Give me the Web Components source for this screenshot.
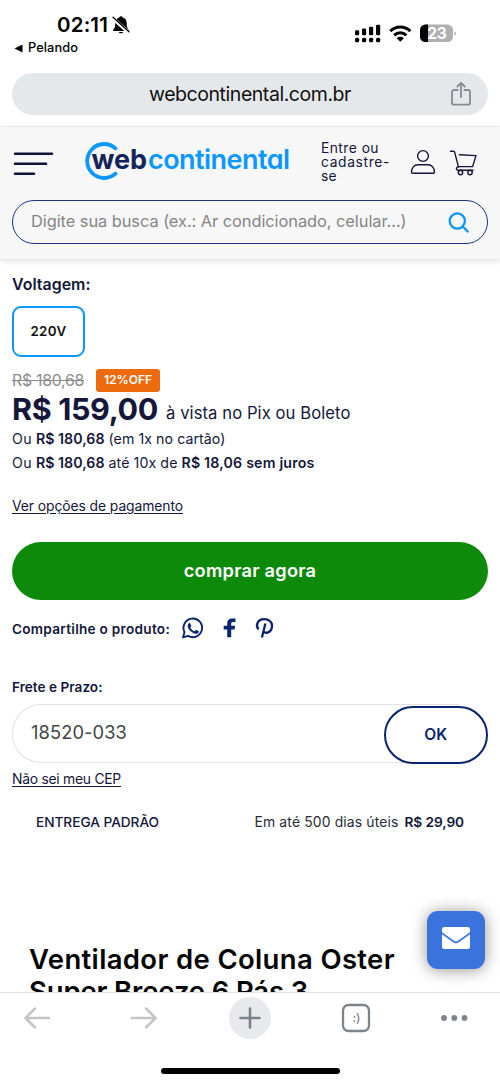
<!DOCTYPE html>
<html lang="pt-BR">
<head>
<meta charset="utf-8">
<title>webcontinental.com.br</title>
<style>
html,body{margin:0;padding:0;background:#fff}
body{font-family:Inter,"Liberation Sans",sans-serif;color:#14173a;width:500px;height:1083px;overflow:hidden}
</style>
</head>
<body>
<app-shell>
  <status-bar slot="top"></status-bar>
  <address-bar slot="top"><x-text s="19.5" w="202" c="#111">webcontinental.com.br</x-text></address-bar>
  <site-header slot="top"></site-header>
  <product-panel></product-panel>
  <mail-button slot="float"></mail-button>
  <browser-toolbar slot="bottom"></browser-toolbar>
</app-shell>
<script>
function element(name, html) {
  const t = document.createElement('template');
  t.innerHTML = html;
  customElements.define(name, class extends HTMLElement {
    constructor() {
      super();
      this.attachShadow({mode: 'open'}).append(t.content.cloneNode(true));
    }
  });
}

element('app-shell', `<style>
:host{display:flex;flex-direction:column;position:relative;width:500px;height:1083px;overflow:hidden;background:#fff}
main{flex:1;min-height:0;overflow:hidden}
header{position:relative;z-index:1}
.float{position:absolute;left:427px;top:911px}
footer{position:relative;z-index:2}
</style><header><slot name="top"></slot></header><main><slot></slot></main><div class="float"><slot name="float"></slot></div><footer><slot name="bottom"></slot></footer>`);

element('status-bar', `<style>
:host{display:flex;justify-content:space-between;height:73px;box-sizing:border-box;padding:15px 43px 0 14px;color:#000}
.time{display:flex;align-items:center;height:20px;padding-left:43px;gap:4px}
.back{display:flex;align-items:center;height:16px;gap:5px;margin-top:5px}
.sys{display:flex;height:22px;margin-top:7px}
svg{display:block}
</style>
<div><div class="time"><x-text s="20.5" w="51" b="600">02:11</x-text>
<svg width="18" height="20" viewBox="0 0 18 20"><path d="M9 1.2a2 2 0 0 1 2 1.6c2.7.8 3.7 3 3.7 5.5 0 4 .8 5.200 2.200 6.700v1H1.100v-1C2.500 13.500 3.300 12.200 3.300 8.300c0-2.500 1-4.700 3.700-5.500a2 2 0 0 1 2-1.600zM6.700 17h4.600c-.5 1.700-4.100 1.700-4.600 0z" fill="#000"/><path d="M0 2.500l17 15.200" stroke="#fff" stroke-width="3.600"/><path d="M1 2.200l16 14.500" stroke="#000" stroke-width="1.300" stroke-linecap="round"/></svg></div>
<div class="back"><svg width="9" height="9" viewBox="0 0 9 9"><path d="M.5 4.500L8.500.5v8z"/></svg><x-text s="12.8" w="50" b="500">Pelando</x-text></div></div>
<div class="sys"><svg width="103" height="22" viewBox="354 22 103 22">
<g><rect x="355" y="30.200" width="4.200" height="5" rx="1.300"/><rect x="362" y="28.600" width="4.200" height="6.600" rx="1.300"/><rect x="369" y="26.800" width="4.200" height="8.400" rx="1.300"/><rect x="376" y="24.800" width="4.200" height="10.400" rx="1.300"/>
<rect x="355" y="37.800" width="4.200" height="4.400" rx="1.500"/><rect x="362" y="37.800" width="4.200" height="4.400" rx="1.500"/><rect x="369" y="37.800" width="4.200" height="4.400" rx="1.500"/><rect x="376" y="37.800" width="4.200" height="4.400" rx="1.500"/></g>
<g fill="none" stroke="#000" stroke-width="3"><path d="M390.300 31.200a14 14 0 0 1 20 0"/><path d="M394.300 35.400a8.300 8.300 0 0 1 12 0"/></g><path d="M396.700 38.200a5.300 5.300 0 0 1 7.200 0l-3.600 3.600z"/>
<rect x="420" y="24.600" width="33" height="17.500" rx="5.500" fill="#b0b0b0"/><path d="M428 24.600h-2.500a5.500 5.500 0 0 0-5.500 5.500v6.500a5.500 5.500 0 0 0 5.500 5.500H428z"/><path d="M454.300 31.200c2.200.8 2.200 3.700 0 4.500z" fill="#b0b0b0"/>
<text x="427.300" y="39.200" font-size="15.500" font-weight="700" fill="#fff" textLength="19.500">23</text></svg></div>`);

element('address-bar', `<style>
:host{display:block;padding:0 12px;height:53px;background:#fff}
.pill{height:42px;border-radius:21px;background:#e5e8eb;display:grid;grid-template-columns:1fr auto 1fr;align-items:center}
svg{justify-self:end;margin-right:17px}
.t{grid-column:2}
</style><div class="pill"><div class="t"><slot></slot></div>
<svg width="20" height="26" viewBox="0 0 20 26" fill="none" stroke="#858c93" stroke-width="1.800" stroke-linecap="round" stroke-linejoin="round"><path d="M6.500 9H3a2 2 0 0 0-2 2v10.700a2 2 0 0 0 2 2h14a2 2 0 0 0 2-2V11a2 2 0 0 0-2-2h-3.500M10 16V2M6.300 5.500L10 1.800l3.700 3.700"/></svg></div>`);

element('site-logo', `<style>
:host{display:block;width:206px;height:38px;flex:none}
.l{display:grid}
.l>*{grid-area:1/1}
.w{display:flex;gap:1px;padding-left:7px;align-items:center;height:36px}
svg{display:block}
x-text{font-feature-settings:"cv11" 1}
</style><div class="l"><svg width="38" height="38" viewBox="0 0 38 38"><path d="M30.500 6.300A17 17 0 1 0 30.500 31.700" fill="none" stroke="#0a97ff" stroke-width="3.800" stroke-linecap="round"/></svg>
<div class="w"><x-text s="27" w="55.500" b="700" c="#13245a">web</x-text><x-text s="27" w="141.500" b="600" c="#0a97ff">continental</x-text></div></div>`);

element('site-header', `<style>
:host{display:block;height:133px;box-sizing:border-box;border-top:1.500px solid #e9e9ea;background:#f7f7f7;box-shadow:0 2px 6px rgba(0,0,0,.13);padding:13px 12px 0}
.row{display:flex;height:60px;align-items:flex-start}
svg{display:block;flex:none}
site-logo{margin:2px 0 0 29.500px}
.login{margin:1px 0 0 30.500px;width:70px;flex:none}
.user{margin:9px 0 0 19px}
.cart{margin:9px 0 0 13px}
.search{display:flex;align-items:center;justify-content:space-between;box-sizing:border-box;height:44px;border:1.500px solid #1d3580;border-radius:22px;padding:0 17px 0 18px}
.login x-text{height:14px;line-height:14px}
.search x-text{margin-bottom:3px}
</style>
<div class="row">
<svg width="43" height="42" viewBox="12 140 43 42" stroke="#11123a" stroke-width="2.600" stroke-linecap="round"><path d="M15 153.700h37M15 163.700h31M15 173.700h19"/></svg>
<site-logo></site-logo>
<div class="login"><x-text s="13.800" w="58">Entre ou</x-text><x-text s="13.800" w="69">cadastre-</x-text><x-text s="13.800" w="16">se</x-text></div>
<svg class="user" width="26" height="26" viewBox="0 0 26 26" fill="none" stroke="#14173a" stroke-width="1.400"><circle cx="13" cy="7" r="5.400"/><path d="M2.800 24.200c-1 0-1.400-.5-1.300-1.300.3-4.300 2.900-7.200 6.500-7.200h10c3.600 0 6.200 2.900 6.500 7.200.1.8-.3 1.300-1.300 1.300z"/></svg>
<svg class="cart" width="29" height="27" viewBox="0 0 29 27" fill="none" stroke="#14173a" stroke-width="1.400" stroke-linecap="round" stroke-linejoin="round"><path d="M1.500 2.200h2.800c.8 0 1.200.4 1.400 1.100L9.500 18.200M10.500 5.700l16.500.9-3.400 11H9.300c-2.500.2-2.500 3.600 0 3.600h14.800"/><circle cx="11.500" cy="23.500" r="2.200"/><circle cx="21" cy="23.500" r="2.200"/></svg>
</div>
<div class="search"><x-text s="16.400" w="375.500" c="#858585">Digite sua busca (ex.: Ar condicionado, celular...)</x-text>
<svg width="23" height="23" viewBox="0 0 23 23" fill="none" stroke="#0a97ff" stroke-width="2.300"><circle cx="10.300" cy="10" r="7.600"/><path d="M15.500 15.200l5.900 5.900"/></svg></div>`);

element('voltage-option', `<style>
:host{display:flex;box-sizing:border-box;width:73px;height:51px;border:2px solid #0a97ff;border-radius:9px;align-items:center;justify-content:center;padding-bottom:1px}
</style><slot></slot>`);

element('price-block', `<style>
:host{display:block}
.old,.main,.line{display:flex}
.old{height:23px;align-items:center;gap:12px}
.old>x-text{text-decoration:line-through}
.badge{display:flex;justify-content:center;align-items:center;background:#ed6b0d;border-radius:3px;width:64px;height:23px}
.badge x-text{margin-bottom:2px}
.main{height:24px;margin-top:5px;gap:8px;align-items:center}
.main x-text + x-text{margin-top:7px}
.line{gap:4px;margin-top:8px}
.line + .line{margin-top:4px}
.pay{text-decoration:underline;text-underline-offset:2px;margin-top:23px}
</style>
<div class="old"><x-text s="15.8" w="72" c="#8b8b8b">R$ 180,68</x-text><span class="badge"><x-text s="12.2" w="48" b="600" c="#fff">12%OFF</x-text></span></div>
<div class="main"><x-text s="30.5" w="146" b="700">R$ 159,00</x-text><x-text s="16.600" w="184.500">à vista no Pix ou Boleto</x-text></div>
<div class="line"><x-text s="14.200" w="20">Ou</x-text><x-text s="14.200" w="68.500" b="600">R$ 180,68</x-text><x-text s="14.200" w="117">(em 1x no cartão)</x-text></div>
<div class="line"><x-text s="14.200" w="20">Ou</x-text><x-text s="14.200" w="68.500" b="600">R$ 180,68</x-text><x-text s="14.200" w="69">até 10x de</x-text><x-text s="14.200" w="133" b="600">R$ 18,06 sem juros</x-text></div>
<x-text class="pay" s="13.900" w="171">Ver opções de pagamento</x-text>`);

element('buy-button', `<style>
:host{display:flex;height:58px;box-sizing:border-box;padding-bottom:1px;border-radius:29px;background:#0e8a0b;align-items:center;justify-content:center}
</style><slot></slot>`);

element('share-row', `<style>
:host{display:flex;height:22px;align-items:center}
svg{display:block;margin:-2px 0 0 11px}
</style><x-text s="13.6" w="158" b="600">Compartilhe o produto:</x-text>
<svg width="94" height="24" viewBox="181 616 94 24" fill="none" stroke="#0b2470">
<path d="M183 637.400l1.500-5.300a9.300 9.300 0 1 1 3.600 3.800z" stroke-width="1.900" stroke-linejoin="round"/>
<path d="M188.300 623.700c.6-.8 1.400-1 1.900-.3l1 2.300c.2.600-.7 1.300-.9 1.700.8 1.800 2.300 3.100 4.200 3.900.4-.2 1.200-1.600 1.800-1.300l2.300 1.100c.5.4.2 1.500-.7 2.200-1.300 1-3.300.5-5.500-.8-2.400-1.500-4.600-4-4.700-6.300 0-.9.200-1.900.6-2.500z" fill="#0b2470" stroke="none"/>
<path d="M227.200 637.300v-7.700h-3.500v-3.900h3.500v-2.400c0-3.200 2-4.900 4.900-4.900 1.500 0 2.800.1 3.400.2v3.500h-2.200c-1.700 0-2.100.8-2.100 2v1.600h4l-.6 3.900h-3.400v7.700z" fill="#0b2470" stroke="none"/>
<path d="M258.600 629.400c-3-3-2-10 5.500-10.200 5-.1 8.400 3.100 7.900 7.400-.6 6.100-6.800 7.700-8.800 4.400M265.400 623.500l-3.500 14" stroke-width="2.300"/></svg>`);

element('shipping-form', `<style>
:host{display:block}
.f{display:flex;height:60px;margin-top:7px;position:relative}
.in{box-sizing:border-box;flex:1;height:59px;margin-right:28px;border:1.500px solid #e3e3e3;border-right:0;border-radius:29px 0 0 29px;padding:0 18px;display:flex;align-items:center}
.ok{box-sizing:border-box;position:absolute;right:0;top:2px;width:104.500px;height:58px;border:2.300px solid #0b2470;border-radius:29px;background:#fff;display:flex;align-items:center;justify-content:center}
.in x-text{margin-bottom:2px}
.u{text-decoration:underline;text-underline-offset:2px;margin-top:5px}
.r{display:flex;padding:0 24px;margin-top:23px}
.r x-text:first-child{margin-right:auto}
.r x-text:last-child{margin-left:6px}
</style><x-text s="13.6" w="90.500" b="600">Frete e Prazo:</x-text>
<div class="f"><div class="in"><x-text s="18.300" w="96" c="#444">18520-033</x-text></div><div class="ok"><x-text s="15.500" w="23" b="600" c="#0b2470">OK</x-text></div></div>
<x-text class="u" s="13.900" w="109">Não sei meu CEP</x-text>
<div class="r"><x-text s="13.700" w="123" b="500">ENTREGA PADRÃO</x-text><x-text s="13.900" w="144" c="#2b2b33">Em até 500 dias úteis</x-text><x-text s="13.700" w="59.500" b="600">R$ 29,90</x-text></div>`);

element('product-panel', `<style>
:host{display:block;padding:16px 12px 0}
voltage-option{margin-top:11px}
price-block{margin-top:12px}
buy-button{margin-top:25.500px}
share-row{margin-top:18px}
shipping-form{margin-top:37px}
h1{margin:111px 0 0 17px}
h1 x-text{height:32px;line-height:33px}
</style>
<x-text s="15.900" w="78.500" b="600">Voltagem:</x-text>
<voltage-option><x-text s="13.300" w="36" b="600" c="#111">220V</x-text></voltage-option>
<price-block></price-block>
<buy-button><x-text s="18.200" w="132.500" b="600" c="#fff">comprar agora</x-text></buy-button>
<share-row></share-row>
<shipping-form></shipping-form>
<h1><x-text s="27.500" w="366" b="600" c="#050505">Ventilador de Coluna Oster</x-text><x-text s="27.500" w="279" b="600" c="#050505">Super Breeze 6 Pás 3</x-text></h1>`);

element('mail-button', `<style>
:host{display:flex;width:58px;height:58px;border-radius:11px;background:#3b73dc;box-shadow:0 1px 16px rgba(0,0,0,.42);align-items:center;justify-content:center}
svg{display:block;margin-top:-4px}
</style><svg width="28" height="22" viewBox="0 0 28 22" fill="#fff"><path d="M2.500 0h23A2.500 2.500 0 0 1 28 2.500V4c0 .9-.4 1.500-1.100 2L16 13.700c-1.500 1.100-2.500 1.100-4 0L1.100 6C.4 5.500 0 4.900 0 4V2.500A2.500 2.500 0 0 1 2.500 0z"/><path d="M0 7.300l11.100 8c2.200 1.500 3.600 1.500 5.800 0l11.100-8v12.200a2.500 2.500 0 0 1-2.500 2.500h-23A2.500 2.500 0 0 1 0 19.500z"/></svg>`);

element('browser-toolbar', `<style>
:host{display:flex;flex-direction:column;align-items:center;height:91px;box-sizing:border-box;border-top:1.500px solid #e2e4e6;background:#fff}
nav{display:grid;grid-template-columns:73px 141px 72px 141px 73px;justify-items:center;align-items:center;width:500px;height:42px;margin-top:4px}
svg{display:block}
.plus{background:#e8e9ed;border-radius:50%}
nav svg:nth-child(4){margin-right:1px}
nav svg:nth-child(5){margin-right:19px}
.home{width:179px;height:6px;border-radius:3px;background:#000;margin-top:29px}
</style><nav>
<svg width="28" height="24" viewBox="0 0 28 24" fill="none" stroke="#c5c5c6" stroke-width="2.500" stroke-linecap="round" stroke-linejoin="round"><path d="M26 12H2.500M12 2.500L2.500 12l9.500 9.500"/></svg>
<svg width="28" height="24" viewBox="0 0 28 24" fill="none" stroke="#c5c5c6" stroke-width="2.500" stroke-linecap="round" stroke-linejoin="round"><path d="M2 12h23.500M16 2.500l9.500 9.500-9.500 9.500"/></svg>
<svg class="plus" width="42" height="42" viewBox="0 0 42 42" stroke="#7b828a" stroke-width="2.600" stroke-linecap="round"><path d="M11.500 21h19M21 11.500v19"/></svg>
<svg width="30" height="30" viewBox="0 0 30 30"><rect x="2" y="2" width="26" height="26" rx="5.500" fill="none" stroke="#7d858c" stroke-width="2.300"/><text x="11.400" y="19.300" font-size="12" font-weight="500" fill="#7d858c">:)</text></svg>
<svg width="28" height="8" viewBox="0 0 28 8" fill="#7d858c"><circle cx="4" cy="4" r="2.900"/><circle cx="14.300" cy="4" r="2.900"/><circle cx="24.500" cy="4" r="2.900"/></svg>
</nav><div class="home"></div>`);

/* Single line of text: s = size, b = weight, c = colour, w = width reached by tracking. */
customElements.define('x-text', class extends HTMLElement {
  constructor() {
    super();
    this.attachShadow({mode: 'open'}).innerHTML = `<style>
:host{display:block;width:max-content;height:20px;line-height:20px;white-space:nowrap;flex:none}
</style><slot></slot>`;
  }
  connectedCallback() {
    const st = this.style, a = n => this.getAttribute(n);
    st.fontSize = a('s') + 'px';
    st.fontWeight = a('b') || 400;
    if (a('c')) st.color = a('c');
    const w = +a('w'), n = this.textContent.length;
    st.letterSpacing = '0px';
    const natural = this.getBoundingClientRect().width;
    if (natural) st.letterSpacing = ((w - natural) / n).toFixed(3) + 'px';
  }
});
</script>
</body>
</html>
